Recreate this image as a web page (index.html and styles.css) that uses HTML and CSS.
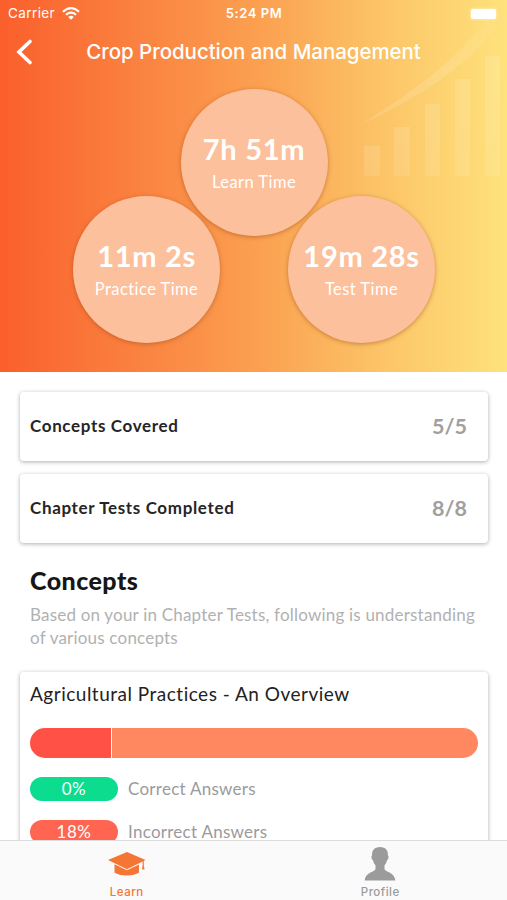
FILE: index.html
```html
<!DOCTYPE html>
<html lang="en">
<head>
<meta charset="utf-8">
<title>Crop Production and Management</title>
<link rel="stylesheet" href="styles.css">
</head>
<body>
<div class="screen">
  <header class="hero">
    <svg class="hero-art" viewBox="0 0 147 200" aria-hidden="true">
      <defs>
        <linearGradient id="fade" x1="0" y1="0" x2="0" y2="1"><stop offset="0" stop-color="#fff" stop-opacity=".13"/><stop offset="1" stop-color="#fff" stop-opacity=".1"/></linearGradient>
        <linearGradient id="trend" x1="0" y1="1" x2="1" y2="0"><stop offset="0" stop-color="#fff" stop-opacity=".13"/><stop offset=".6" stop-color="#fff" stop-opacity=".13"/><stop offset="1" stop-color="#fff" stop-opacity=".04"/></linearGradient>
      </defs>
      <path fill="url(#trend)" d="M0 125C38 101 91 67 126 20l9 8C107 66 62 96 0 125z"/>
      <g fill="url(#fade)"><path d="M4 146h16v30H4z"/><path d="M34 127h16v49H34z"/><path d="M65 104h15v72H65z"/><path d="M95 79h15v97H95z"/><path d="M125 56h15v120h-15z"/></g>
    </svg>
    <div class="status">
      <div class="carrier"><span>Carrier</span>
        <svg width="18" height="13" viewBox="0 0 18 13" fill="none" stroke="#fff" stroke-width="2.1"><path d="M1 4.7Q9-2.3 17 4.7"/><path d="M3.9 7.8q5.1-4.4 10.2 0"/><path d="M6.2 9.9q2.8-2.3 5.6 0L9 12.8z" fill="#fff" stroke="none"/></svg>
      </div>
      <span class="clock">5:24 PM</span>
      <span class="battery"></span>
    </div>
    <div class="nav">
      <svg class="back" width="18" height="28" viewBox="0 0 18 28" fill="none" stroke="#fff" stroke-width="3.6" stroke-linecap="round" stroke-linejoin="miter"><path d="M15 3.500 4 14l11 10.500"/></svg>
      <h1>Crop Production and Management</h1>
    </div>
    <div class="times">
      <div class="circle"><strong>7h 51m</strong><span>Learn Time</span></div>
      <div class="pair">
        <div class="circle"><strong>11m 2s</strong><span>Practice Time</span></div>
        <div class="circle"><strong>19m 28s</strong><span>Test Time</span></div>
      </div>
    </div>
  </header>
  <main>
    <section class="card stat"><span class="name">Concepts Covered</span><span class="value">5/5</span></section>
    <section class="card stat"><span class="name">Chapter Tests Completed</span><span class="value">8/8</span></section>
    <div class="intro">
      <h2>Concepts</h2>
      <p>Based on your in Chapter Tests, following is understanding<br>of various concepts</p>
    </div>
    <section class="card concept">
      <h3>Agricultural Practices - An Overview</h3>
      <div class="bar"><span class="bar-wrong"></span><span class="bar-rest"></span></div>
      <div class="answer"><span class="pill green">0%</span><span class="label">Correct Answers</span></div>
      <div class="answer"><span class="pill red">18%</span><span class="label">Incorrect Answers</span></div>
    </section>
  </main>
  <nav class="tabs">
    <a class="tab active">
      <svg width="38" height="24" viewBox="0 0 38 24" fill="currentColor"><path d="M19 0 0 8l19 9.200L37.500 8z"/><path d="M6.500 12.300 19 18.300l12-5.800v8c-5 4-19.500 4-24.500 0z"/><path d="M34.600 9h1.200v4.300l.8 4.200H34l.6-4.200z"/></svg>
      <span>Learn</span>
    </a>
    <a class="tab">
      <svg width="32" height="34" viewBox="0 0 32 34" fill="currentColor"><path d="M16 0c5.600 0 8.300 3.500 7.900 8.500 1.300.5.400 4.500-.9 4.700-.4 2.300-1.300 3.900-2.500 5.100v3.900c1.500 3 10.500 3.500 10.800 11.300H.7C1 25.700 10 25.200 11.500 22.200v-3.900C10.300 17.100 9.400 15.500 9 13.200c-1.300-.2-2.200-4.200-.9-4.700C7.700 3.500 10.400 0 16 0z"/></svg>
      <span>Profile</span>
    </a>
  </nav>
</div>
</body>
</html>
```
FILE: styles.css
```css
* { box-sizing: border-box; }
body { margin: 0; background: #fff; font-family: Lato, sans-serif; }
h1, h2, h3, p { margin: 0; }
svg { display: block; }
.screen { position: relative; width: 507px; height: 900px; overflow: hidden; display: flex; flex-direction: column; }

.hero { position: relative; flex: none; height: 372px; color: #fff; background: linear-gradient(90deg, #fa5f2c 0%, #fa8240 27%, #fba050 51%, #fcc568 76%, #fee27c 100%); }
.hero-art { position: absolute; left: 360px; top: 0; width: 147px; height: 200px; }
.status { position: relative; height: 27px; display: grid; grid-template-columns: 1fr auto 1fr; align-items: center; padding: 0 11px 0 8px; font: 400 13.500px/27px Inter, sans-serif; }
.carrier { display: flex; align-items: center; gap: 7px; letter-spacing: .4px; }
.clock { font-weight: 600; font-size: 13px; letter-spacing: .6px; margin-left: 4px; }
.battery { justify-self: end; width: 25px; height: 10px; border-radius: 2px; background: #fff; box-shadow: 0 0 2px 1px rgba(255,255,255,.35); }
.nav { position: relative; height: 50px; display: flex; align-items: center; justify-content: center; }
.back { position: absolute; left: 15px; top: 11px; }
h1 { font: 500 20.500px/50px Inter, sans-serif; letter-spacing: -.05px; }
.times { position: relative; display: flex; flex-direction: column; align-items: center; padding: 12px 0 0 1px; }
.pair { display: flex; gap: 68px; margin-top: -40px; }
.circle { width: 147px; height: 147px; border-radius: 50%; background: #fdc09c; box-shadow: 0 1px 4px rgba(150,70,20,.5); display: flex; flex-direction: column; align-items: center; padding-top: 42px; white-space: nowrap; }
.circle strong { font-size: 29px; line-height: 36px; font-weight: 700; letter-spacing: .7px; }
.circle span { font-size: 16.500px; line-height: 22px; margin-top: 4px; font-weight: 400; letter-spacing: .45px; }

main { display: flex; flex-direction: column; padding: 20px 19px 0 20px; }
.card { background: #fff; border-radius: 4px; box-shadow: 0 1px 4px rgba(0,0,0,.32); }
.stat { height: 69px; margin-bottom: 13px; padding: 0 21px 2px 10px; display: flex; align-items: center; justify-content: space-between; }
.name { font-size: 17px; font-weight: 700; color: #252525; letter-spacing: .65px; }
.value { font-size: 21.500px; font-weight: 700; color: #a0a0a0; }
.intro { padding: 8px 10px 0; height: 116px; }
h2 { font-size: 25px; line-height: 32px; font-weight: 900; color: #161616; letter-spacing: .45px; }
p { margin-top: 7px; font-size: 17px; line-height: 23px; color: #b1b1b1; white-space: nowrap; letter-spacing: .2px; }
.concept { height: 240px; padding: 8px 10px 0; }
h3 { font-size: 19px; line-height: 27px; font-weight: 400; color: #222; letter-spacing: .5px; }
.bar { display: flex; gap: 1px; height: 30px; margin: 21px 0 19px; border-radius: 15px; overflow: hidden; }
.bar-wrong { width: 80.500px; background: #ff5146; }
.bar-rest { flex: 1; background: #ff8860; }
.answer { display: flex; align-items: center; height: 24px; margin-bottom: 19px; gap: 10px; font-size: 17px; color: #9b9b9b; letter-spacing: .27px; }
.label { padding-bottom: 2px; }
.pill { width: 88px; height: 24px; border-radius: 12px; color: #fff; text-align: center; line-height: 23px; letter-spacing: .5px; }
.green { background: #0cdc8e; }
.red { background: #ff6551; }

.tabs { position: absolute; left: 0; right: 0; bottom: 0; height: 60px; display: flex; background: #fafafa; border-top: 1px solid #dcdcdc; }
.tab { flex: 1; display: flex; flex-direction: column; align-items: center; justify-content: flex-end; gap: 4px; padding-bottom: 1px; color: #9b9b9b; font: 500 11.500px/14px Inter, sans-serif; letter-spacing: .5px; }
.tab.active { color: #f57534; }
.active svg { margin-bottom: 5px; }
```
